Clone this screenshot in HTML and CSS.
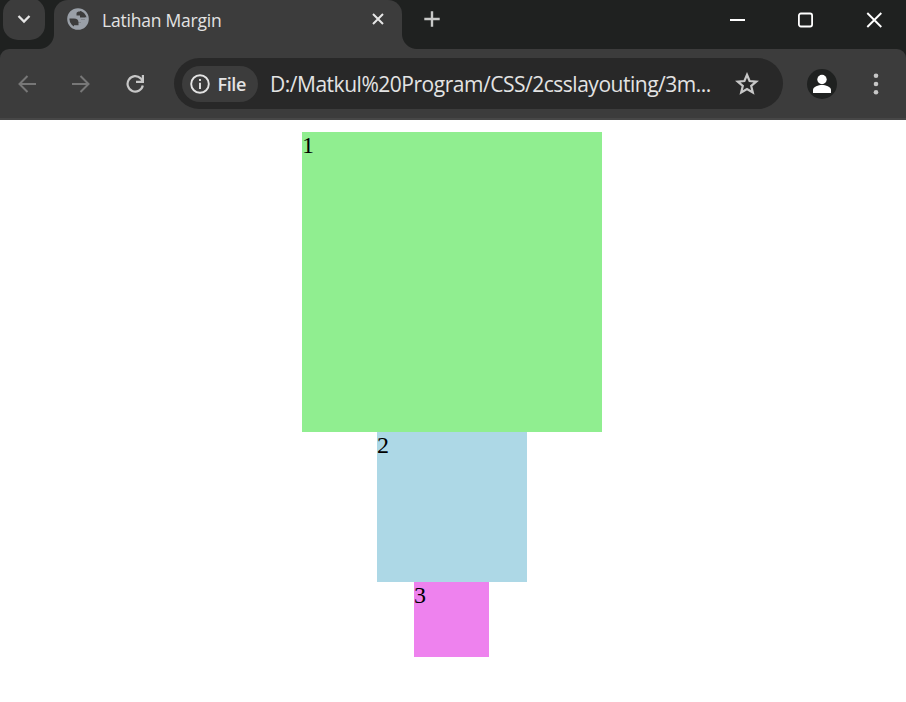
FILE: index.html
```html
<!DOCTYPE html>
<html lang="en">
<head>
<meta charset="utf-8">
<title>Latihan Margin</title>
<link rel="stylesheet" href="styles.css">
</head>
<body>
<header class="browser">
  <div class="tab-strip">
    <button class="tab-search" aria-label="Search tabs">
      <svg width="14" height="10" viewBox="0 0 14 10"><path d="M1.500 2 7 7.500 12.500 2" fill="none" stroke="#e6e6e6" stroke-width="2.300"/></svg>
    </button>
    <div class="tab">
      <svg class="globe" width="22" height="22" viewBox="0 0 22 22"><circle cx="11" cy="11" r="9.700" fill="#3c3c3c" stroke="#9aa0a8" stroke-width="2.200"/><path d="M13 2C7 .5 1.500 5 1.500 10.500H7c3 0 4.500 1.500 4.500 4H14v-3h4V9.500h-5V7.500H9.500V5.500C9.500 4 11 3.500 13 3.500ZM20.500 9.500c.5 6-4 11-9.500 11-1.500 0-3-.4-4-1v-2.200h4.500v-3H14v-3h4v-2Z" fill="#9aa0a8"/></svg>
      <span class="tab-title">Latihan Margin</span>
      <svg class="tab-close" width="12" height="12" viewBox="0 0 12 12"><path d="m1 1 10 10M11 1 1 11" stroke="#e6e6e6" stroke-width="2"/></svg>
    </div>
    <svg class="new-tab" width="16" height="16" viewBox="0 0 16 16"><path d="M8 .3v15.400M.3 8h15.400" stroke="#c8c9c8" stroke-width="2.400"/></svg>
    <div class="window-controls">
      <svg class="minimize" width="15" height="16" viewBox="0 0 15 16"><path d="M0 8h15" stroke="#fff" stroke-width="2"/></svg>
      <svg width="16" height="16" viewBox="0 0 16 16"><rect x="1.900" y="1.500" width="13.200" height="13" rx="2" fill="none" stroke="#fff" stroke-width="1.800"/></svg>
      <svg width="16" height="16" viewBox="0 0 16 16"><path d="m1.300 1 14 14M15.300 1l-14 14" stroke="#fff" stroke-width="1.900"/></svg>
    </div>
  </div>
  <div class="toolbar">
    <div class="nav">
      <svg width="18" height="18" viewBox="0 0 18 18"><path d="M18 9H1.500M9.500 1 1.500 9l8 8" fill="none" stroke="#777" stroke-width="2"/></svg>
      <svg width="18" height="18" viewBox="0 0 18 18"><path d="M0 9h16.500M8.500 1l8 8-8 8" fill="none" stroke="#777" stroke-width="2"/></svg>
      <svg width="18" height="18" viewBox="0 .5 18 18"><path d="M16.800 11A7.700 7.700 0 1 1 14.700 3.900l2 2.300" fill="none" stroke="#c7c7c7" stroke-width="2.200"/><path d="M18 .5v8h-8V6.200h4.500L15.800 5V.5Z" fill="#c7c7c7"/></svg>
    </div>
    <div class="address-bar">
      <div class="chip">
        <svg width="20" height="20" viewBox="0 0 20 20"><circle cx="10" cy="10" r="8.800" fill="none" stroke="#e3e3e3" stroke-width="1.900"/><path d="M10 8.800V15M10 5v2" stroke="#e3e3e3" stroke-width="1.900"/></svg>
        <span class="chip-label">File</span>
      </div>
      <span class="url">D:/Matkul%20Program/CSS/2csslayouting/3m...</span>
      <svg class="star" width="24" height="24" viewBox="0 0 24 24"><path d="m12 2.800 2.600 6.200 6.700.6-5.100 4.400 1.600 6.500L12 17l-5.800 3.500L7.800 14 2.700 9.600 9.400 9Z" fill="none" stroke="#c7c7c7" stroke-width="2.200"/></svg>
    </div>
    <svg class="profile" width="30" height="30" viewBox="0 0 30 30"><circle cx="15" cy="15" r="15" fill="#1f2120"/><circle cx="15" cy="10.500" r="4.700" fill="#fff"/><path d="M6 24v-3c0-3.500 5.500-5 9-5s9 1.500 9 5v3Z" fill="#fff"/></svg>
    <svg class="menu" width="6" height="22" viewBox="0 0 6 22" fill="#c7c7c7"><circle cx="3" cy="2.700" r="2.300"/><circle cx="3" cy="11" r="2.300"/><circle cx="3" cy="19.300" r="2.300"/></svg>
  </div>
</header>
<main class="page">
  <div class="box box-1">1</div>
  <div class="box box-2">2</div>
  <div class="box box-3">3</div>
</main>
</body>
</html>
```
FILE: styles.css
```css
* { box-sizing: border-box; }
body { margin: 0; background: #fff; height: 702px; overflow: hidden; }
svg { display: block; flex: none; }
.browser { background: #1f2120; font-family: "Open Sans", "Noto Sans", sans-serif; color: #e3e3e3; }
.tab-strip { display: flex; height: 49px; align-items: flex-start; }
.tab-search {
  display: flex; justify-content: center; align-items: center;
  width: 42px; height: 42px; margin: -2px 9px 0 3px; padding: 0 0 1px;
  border: 0; border-radius: 15px; background: #3c3c3c;
}
.tab {
  position: relative; display: flex; align-items: center;
  width: 348px; height: 49px; padding: 0 18px 10px 13px;
  border-radius: 14px 14px 0 0; background: #3c3c3c;
}
.tab::before, .tab::after {
  content: ""; position: absolute; bottom: 0; width: 15px; height: 15px;
}
.tab::before { left: -15px; background: radial-gradient(circle at 0 0, transparent 14.500px, #3c3c3c 15.500px); }
.tab::after { right: -15px; background: radial-gradient(circle at 100% 0, transparent 14.500px, #3c3c3c 15.500px); }
.globe { margin-bottom: 1px; }
.tab-title { margin-left: 13px; padding-top: 1px; font-size: 17.500px; line-height: 24px; letter-spacing: -0.220px; white-space: nowrap; }
.tab-close { margin-left: auto; margin-bottom: 1px; }
.new-tab { margin: 11px 0 0 22px; }
.window-controls { display: flex; gap: 53px; margin: 12px 24px 0 auto; }
.minimize { margin-right: -1px; }
.toolbar {
  display: flex; align-items: center; height: 71px; padding: 0 27px 2px 18px;
  border-bottom: 2px solid #474747; border-radius: 9px 9px 0 0; background: #3c3c3c;
}
.nav { display: flex; gap: 36px; margin-top: 2px; }
.address-bar {
  display: flex; align-items: center; width: 609px; height: 51px;
  margin: 2px 0 0 30px; padding: 0 24px 0 8px; border-radius: 26px; background: #282828;
}
.chip {
  display: flex; align-items: center; gap: 8px; width: 76px; height: 36px;
  padding-left: 7.500px; border-radius: 18px; background: #3c3c3c;
}
.chip-label { font-size: 18px; font-weight: 600; line-height: 24px; letter-spacing: -0.400px; }
.url { margin-left: 12px; font-size: 21px; line-height: 28px; letter-spacing: -0.480px; white-space: nowrap; }
.star { margin-left: auto; }
.profile { margin: 2px 0 0 24px; }
.menu { margin: 2px 0 0 auto; }
.page { width: 904px; padding-top: 12px; font: 24px/27px "Liberation Serif", serif; color: #000; }
.box { margin: 0 auto; }
.box-1 { width: 300px; height: 300px; background: lightgreen; }
.box-2 { width: 150px; height: 150px; background: lightblue; }
.box-3 { width: 75px; height: 75px; margin-left: 414px; background: violet; }
```
